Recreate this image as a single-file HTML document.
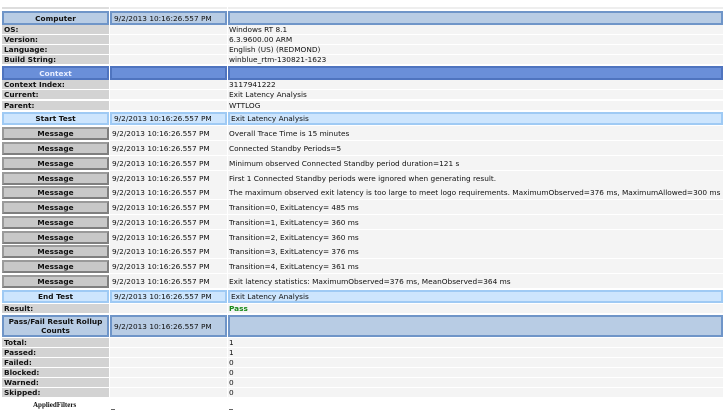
<!DOCTYPE html>
<html><head><style>
body{margin:0;width:723px;height:419px;background:#fff;position:relative;overflow:hidden;font-family:"DejaVu Sans","Liberation Sans",sans-serif;font-size:7.35px;color:#111}
.c{position:absolute;box-sizing:border-box;white-space:nowrap;overflow:hidden;line-height:normal;display:flex;align-items:center}
.l{left:2px;width:107px;font-weight:bold;background:#d3d3d3;padding-left:2px}
.m{left:110px;width:117px;background:#f4f4f4;padding-left:2px}
.r{left:228px;width:495px;background:#f4f4f4;padding-left:1px}
.hb{background:#b8cce4;border:2px solid #6f95c8}
.hc{background:#6a8fd9;border:2px solid #4f74bf;color:#e8eeff}
.ht{background:#cde5fd;border:2px solid #9fcaf4}
.ctr{justify-content:center;font-weight:bold;padding:0}
.msg{background:#c8c8c8;border:2px solid #7f7f7f;border-top-color:#9a9a9a;border-left-color:#9a9a9a}
</style></head><body>
<div class="c" style="left:2px;top:7px;width:107px;height:2px;background:#ddd"></div>
<div class="c" style="left:110px;top:7px;width:117px;height:2px;background:#eee"></div>
<div class="c" style="left:228px;top:7px;width:495px;height:2px;background:#eee"></div>

<div class="c l hb ctr" style="top:11px;height:14px">Computer</div>
<div class="c m hb" style="top:11px;height:14px">9/2/2013 10:16:26.557 PM</div>
<div class="c r hb" style="top:11px;height:14px"></div>

<div class="c l" style="top:25px;height:9px">OS:</div><div class="c m" style="top:25px;height:9px"></div><div class="c r" style="top:25px;height:9px">Windows RT 8.1</div>
<div class="c l" style="top:35px;height:9px">Version:</div><div class="c m" style="top:35px;height:9px"></div><div class="c r" style="top:35px;height:9px">6.3.9600.00 ARM</div>
<div class="c l" style="top:45px;height:9px">Language:</div><div class="c m" style="top:45px;height:9px"></div><div class="c r" style="top:45px;height:9px">English (US) (REDMOND)</div>
<div class="c l" style="top:55px;height:9px">Build String:</div><div class="c m" style="top:55px;height:9px"></div><div class="c r" style="top:55px;height:9px">winblue_rtm-130821-1623</div>

<div class="c l hc ctr" style="top:66px;height:14px">Context</div>
<div class="c m hc" style="top:66px;height:14px"></div>
<div class="c r hc" style="top:66px;height:14px"></div>

<div class="c l" style="top:80px;height:9px">Context Index:</div><div class="c m" style="top:80px;height:9px"></div><div class="c r" style="top:80px;height:9px">3117941222</div>
<div class="c l" style="top:90px;height:9px">Current:</div><div class="c m" style="top:90px;height:9px"></div><div class="c r" style="top:90px;height:9px">Exit Latency Analysis</div>
<div class="c l" style="top:101px;height:9px">Parent:</div><div class="c m" style="top:101px;height:9px"></div><div class="c r" style="top:101px;height:9px">WTTLOG</div>

<div class="c l ht ctr" style="top:112px;height:13px">Start Test</div>
<div class="c m ht" style="top:112px;height:13px">9/2/2013 10:16:26.557 PM</div>
<div class="c r ht" style="top:112px;height:13px">Exit Latency Analysis</div>

<div class="c l msg ctr" style="top:127px;height:13px">Message</div><div class="c m" style="top:126px;height:14px">9/2/2013 10:16:26.557 PM</div><div class="c r" style="top:126px;height:14px">Overall Trace Time is 15 minutes</div>
<div class="c l msg ctr" style="top:142px;height:13px">Message</div><div class="c m" style="top:141px;height:14px">9/2/2013 10:16:26.557 PM</div><div class="c r" style="top:141px;height:14px">Connected Standby Periods=5</div>
<div class="c l msg ctr" style="top:157px;height:13px">Message</div><div class="c m" style="top:156px;height:14px">9/2/2013 10:16:26.557 PM</div><div class="c r" style="top:156px;height:14px">Minimum observed Connected Standby period duration=121 s</div>
<div class="c l msg ctr" style="top:172px;height:13px">Message</div><div class="c m" style="top:171px;height:14px">9/2/2013 10:16:26.557 PM</div><div class="c r" style="top:171px;height:14px">First 1 Connected Standby periods were ignored when generating result.</div>
<div class="c l msg ctr" style="top:186px;height:13px">Message</div><div class="c m" style="top:185px;height:14px">9/2/2013 10:16:26.557 PM</div><div class="c r" style="top:185px;height:14px">The maximum observed exit latency is too large to meet logo requirements. MaximumObserved=376 ms, MaximumAllowed=300 ms</div>
<div class="c l msg ctr" style="top:201px;height:13px">Message</div><div class="c m" style="top:200px;height:14px">9/2/2013 10:16:26.557 PM</div><div class="c r" style="top:200px;height:14px">Transition=0, ExitLatency= 485 ms</div>
<div class="c l msg ctr" style="top:216px;height:13px">Message</div><div class="c m" style="top:215px;height:14px">9/2/2013 10:16:26.557 PM</div><div class="c r" style="top:215px;height:14px">Transition=1, ExitLatency= 360 ms</div>
<div class="c l msg ctr" style="top:231px;height:13px">Message</div><div class="c m" style="top:230px;height:14px">9/2/2013 10:16:26.557 PM</div><div class="c r" style="top:230px;height:14px">Transition=2, ExitLatency= 360 ms</div>
<div class="c l msg ctr" style="top:245px;height:13px">Message</div><div class="c m" style="top:244px;height:14px">9/2/2013 10:16:26.557 PM</div><div class="c r" style="top:244px;height:14px">Transition=3, ExitLatency= 376 ms</div>
<div class="c l msg ctr" style="top:260px;height:13px">Message</div><div class="c m" style="top:259px;height:14px">9/2/2013 10:16:26.557 PM</div><div class="c r" style="top:259px;height:14px">Transition=4, ExitLatency= 361 ms</div>
<div class="c l msg ctr" style="top:275px;height:13px">Message</div><div class="c m" style="top:274px;height:14px">9/2/2013 10:16:26.557 PM</div><div class="c r" style="top:274px;height:14px">Exit latency statistics: MaximumObserved=376 ms, MeanObserved=364 ms</div>

<div class="c l ht ctr" style="top:290px;height:13px">End Test</div>
<div class="c m ht" style="top:290px;height:13px">9/2/2013 10:16:26.557 PM</div>
<div class="c r ht" style="top:290px;height:13px">Exit Latency Analysis</div>

<div class="c l" style="top:304px;height:9px">Result:</div><div class="c m" style="top:304px;height:9px"></div><div class="c r" style="top:304px;height:9px;color:#1a8a1a;font-weight:bold">Pass</div>

<div class="c l hb ctr" style="top:315px;height:22px;white-space:normal;text-align:center;line-height:9px">Pass/Fail Result Rollup Counts</div>
<div class="c m hb" style="top:315px;height:22px">9/2/2013 10:16:26.557 PM</div>
<div class="c r hb" style="top:315px;height:22px"></div>

<div class="c l" style="top:338px;height:9px">Total:</div><div class="c m" style="top:338px;height:9px"></div><div class="c r" style="top:338px;height:9px">1</div>
<div class="c l" style="top:348px;height:9px">Passed:</div><div class="c m" style="top:348px;height:9px"></div><div class="c r" style="top:348px;height:9px">1</div>
<div class="c l" style="top:358px;height:9px">Failed:</div><div class="c m" style="top:358px;height:9px"></div><div class="c r" style="top:358px;height:9px">0</div>
<div class="c l" style="top:368px;height:9px">Blocked:</div><div class="c m" style="top:368px;height:9px"></div><div class="c r" style="top:368px;height:9px">0</div>
<div class="c l" style="top:378px;height:9px">Warned:</div><div class="c m" style="top:378px;height:9px"></div><div class="c r" style="top:378px;height:9px">0</div>
<div class="c l" style="top:388px;height:9px">Skipped:</div><div class="c m" style="top:388px;height:9px"></div><div class="c r" style="top:388px;height:9px">0</div>

<div class="c" style="left:33px;top:400px;height:10px;font-family:'Liberation Serif',serif;font-weight:bold;font-size:7px">AppliedFilters</div>
<div class="c" style="left:111px;top:409px;width:4px;height:1px;background:#666"></div>
<div class="c" style="left:229px;top:409px;width:4px;height:1px;background:#666"></div>
</body></html>
